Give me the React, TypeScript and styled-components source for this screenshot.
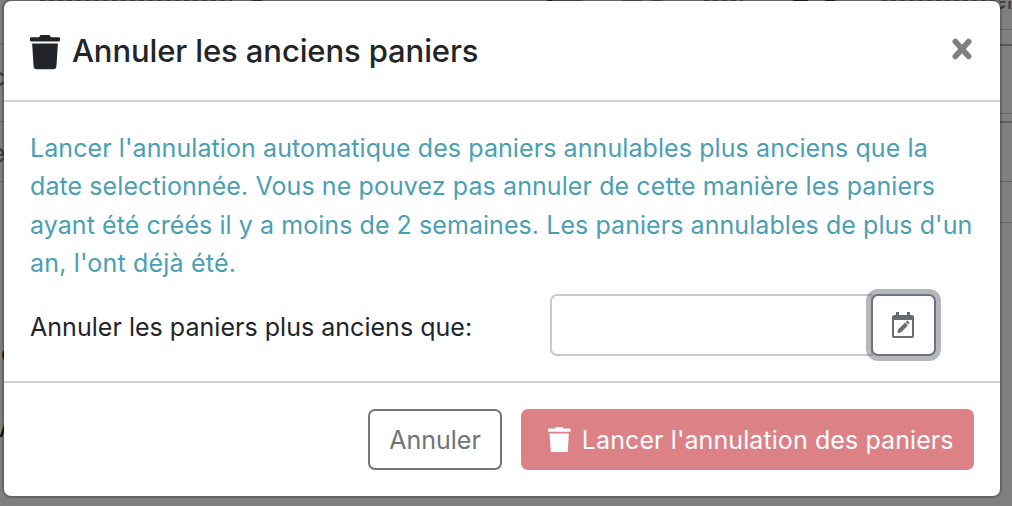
import React from 'react';
import styled, { createGlobalStyle } from 'styled-components';
import { FaTrash } from 'react-icons/fa';

const GlobalStyle = createGlobalStyle`
  * { box-sizing: border-box; }
  body { margin: 0; overflow: hidden; font-family: Inter, 'Liberation Sans', sans-serif; color: #212529; }
`;

const Page = styled.main`
  position: relative;
  height: 506px;
  background: #7f7f7f;
  overflow: hidden;
`;

const TopRow = styled.div`
  display: flex;
  height: 1px;
`;

const Segment = styled.div<{ $width: number; $tone?: string; $dashed?: boolean }>`
  width: ${p => p.$width}px;
  background: ${p =>
    p.$dashed ? 'repeating-linear-gradient(90deg, #4a4a4a 0 5px, #7f7f7f 5px 9px)' : p.$tone ?? 'transparent'};
`;

const Backdrop = styled.div`
  display: flex;
  justify-content: space-between;
  height: 505px;
`;

const Edge = styled.div<{ $width: number }>`
  width: ${p => p.$width}px;
  overflow: hidden;
`;

const Cell = styled.div<{ $height: number; $rule?: string }>`
  height: ${p => p.$height}px;
  border-bottom: ${p => p.$rule ?? '0'};
  overflow: hidden;
`;

const CellText = styled.div<{ $top: number; $left: number; $color?: string }>`
  margin: ${p => p.$top}px 0 0 ${p => p.$left}px;
  color: ${p => p.$color ?? '#3c3c3c'};
  font-size: 25px;
  line-height: 26px;
  white-space: nowrap;
`;

const Dialog = styled.section`
  position: absolute;
  left: 2px;
  top: -1px;
  width: 1000px;
  height: 499px;
  display: flex;
  flex-direction: column;
  background: #fff;
  background-clip: padding-box;
  border: 2px solid rgba(0, 0, 0, 0.2);
  border-radius: 9px;
`;

const Header = styled.header`
  display: flex;
  align-items: center;
  height: 101px;
  padding: 0 28px 0 26px;
  border-bottom: 2px solid #d0d2d4;
`;

const Title = styled.h1`
  flex: 1;
  margin: 0 0 0 12px;
  font-size: 31px;
  line-height: 46px;
  font-weight: 500;
  letter-spacing: -0.11px;
`;

const Close = styled.button`
  display: flex;
  padding: 0;
  margin-bottom: 3px;
  border: 0;
  background: none;
`;

const Body = styled.div`
  flex: 1;
  padding: 27px 26px 0;
`;

const Info = styled.p`
  margin: 0;
  color: #4a9fb3;
  font-size: 25px;
  line-height: 38.3px;
`;

const Line = styled.span<{ $spacing: number }>`
  display: block;
  white-space: nowrap;
  letter-spacing: ${p => p.$spacing}px;
`;

const Field = styled.div`
  display: flex;
  align-items: center;
  justify-content: space-between;
  margin-top: 12px;
  padding-right: 38px;
`;

const Label = styled.label`
  padding-top: 3px;
  font-size: 25px;
  letter-spacing: 0.03px;
`;

const InputGroup = styled.div`
  display: flex;
`;

const DateInput = styled.input`
  width: 323px;
  height: 62px;
  border: 2px solid #c9cacb;
  border-radius: 7px 0 0 7px;
  background: #fff;
  outline: none;
`;

const PickerButton = styled.button`
  display: flex;
  align-items: center;
  justify-content: center;
  width: 65px;
  height: 62px;
  margin-left: -2px;
  padding: 0 1px 1px 0;
  border: 2px solid #6c757d;
  border-radius: 7px;
  background: #fff;
  box-shadow: 0 0 0 5px rgba(108, 112, 120, 0.5);
`;

const Footer = styled.footer`
  display: flex;
  justify-content: flex-end;
  gap: 19px;
  height: 115px;
  padding: 26px 26px 0;
  border-top: 2px solid #d0d2d4;
`;

const Button = styled.button<{ $danger?: boolean }>`
  display: flex;
  align-items: center;
  justify-content: center;
  gap: 11px;
  width: ${p => (p.$danger ? 453 : 134)}px;
  height: 61px;
  padding: 0 0 0 ${p => (p.$danger ? 7 : 0)}px;
  border: 2px solid ${p => (p.$danger ? '#dc8287' : '#72767b')};
  border-radius: 7px;
  background: ${p => (p.$danger ? '#dc8287' : '#fff')};
  color: ${p => (p.$danger ? '#fff' : '#6f7478')};
  font: 400 25px Inter, sans-serif;
  letter-spacing: ${p => (p.$danger ? 0.09 : 0)}px;
  white-space: nowrap;
`;

const TrashIcon = styled(FaTrash)<{ $w: number; $h: number; $drop?: number }>`
  flex: none;
  width: ${p => p.$w}px;
  height: ${p => p.$h}px;
  margin-top: ${p => p.$drop ?? 0}px;
`;

const message: [string, number][] = [
  ["Lancer l'annulation automatique des paniers annulables plus anciens que la", 0.09],
  ['date selectionnée. Vous ne pouvez pas annuler de cette manière les paniers', 0.09],
  ["ayant été créés il y a moins de 2 semaines. Les paniers annulables de plus d'un", 0.065],
  ["an, l'ont déjà été.", 0.19],
];

export default function App() {
  return (
    <Page>
      <GlobalStyle />
      <TopRow aria-hidden>
        <Segment $width={40} />
        <Segment $width={192} $dashed />
        <Segment $width={20} />
        <Segment $width={10} $tone="#3a3a3a" />
        <Segment $width={285} />
        <Segment $width={5} $tone="#222" />
        <Segment $width={30} $tone="#555" />
        <Segment $width={40} />
        <Segment $width={20} $tone="#555" />
        <Segment $width={9} />
        <Segment $width={11} $tone="#555" />
        <Segment $width={42} />
        <Segment $width={39} $dashed />
        <Segment $width={50} />
        <Segment $width={15} $tone="#2a2226" />
        <Segment $width={17} />
        <Segment $width={10} $tone="#2a2226" />
        <Segment $width={47} />
        <Segment $width={118} $dashed />
      </TopRow>
      <Backdrop aria-hidden>
        <Edge $width={4}>
          <Cell $height={44} $rule="1px solid #666" />
          <Cell $height={77} $rule="1px solid #666"><CellText $top={19} $left={-9}>c</CellText></Cell>
          <Cell $height={60} $rule="1px solid #666"><CellText $top={18} $left={-9}>e</CellText></Cell>
          <Cell $height={228}><CellText $top={158} $left={1} $color="#111">c</CellText></Cell>
          <Cell $height={60}><CellText $top={5} $left={-1} $color="#111">A</CellText></Cell>
        </Edge>
        <Edge $width={12}>
          <Cell $height={29} $rule="1px solid #686868"><CellText $top={-14} $left={-8}>el</CellText></Cell>
          <Cell $height={16} $rule="2px solid #585858" />
          <Cell $height={68} $rule="1px solid #686868" />
          <Cell $height={9} $rule="2px solid #606060" />
          <Cell $height={59} $rule="1px solid #606060" />
          <Cell $height={41} $rule="1px solid #686868" />
        </Edge>
      </Backdrop>
      <Dialog role="dialog">
        <Header>
          <TrashIcon $w={30} $h={34.3} $drop={4} />
          <Title>Annuler les anciens paniers</Title>
          <Close aria-label="Fermer">
            <svg width="20" height="22" viewBox="0 0 20 22" stroke="#808080" strokeWidth="5.8" strokeLinecap="round">
              <path d="M3.4 3.6 16.6 18.4M16.6 3.6 3.4 18.4" />
            </svg>
          </Close>
        </Header>
        <Body>
          <Info>
            {message.map(([text, spacing]) => (
              <Line key={text} $spacing={spacing}>{text}</Line>
            ))}
          </Info>
          <Field>
            <Label htmlFor="date">Annuler les paniers plus anciens que:</Label>
            <InputGroup>
              <DateInput id="date" />
              <PickerButton aria-label="Choisir une date">
                <svg width="24" height="26" viewBox="0 0 24 26" fill="#6a6d70">
                  <path fillRule="evenodd" d="M5 0h3v3h8V0h3v3h2a2 2 0 0 1 2 2v19a2 2 0 0 1-2 2H3a2 2 0 0 1-2-2V5a2 2 0 0 1 2-2h2zM3 8v16h18V8z" />
                  <path d="m6.5 21 .6-3.4 7-7 2.8 2.8-7 7zM14.8 10l1.5-1.4 2.4 2.4-1.5 1.5z" />
                </svg>
              </PickerButton>
            </InputGroup>
          </Field>
        </Body>
        <Footer>
          <Button>Annuler</Button>
          <Button $danger>
            <TrashIcon $w={22.5} $h={25.7} />
            Lancer l'annulation des paniers
          </Button>
        </Footer>
      </Dialog>
    </Page>
  );
}
